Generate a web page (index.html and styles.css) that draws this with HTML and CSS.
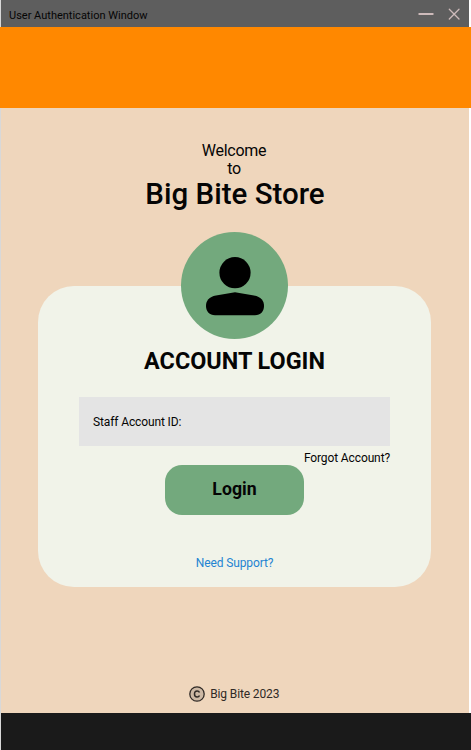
FILE: index.html
```html
<!DOCTYPE html>
<html lang="en">
<head>
<meta charset="utf-8">
<title>User Authentication Window</title>
<link rel="stylesheet" href="styles.css">
</head>
<body>
<div class="window">
  <header class="titlebar">
    <span class="titlebar-text">User Authentication Window</span>
    <svg class="controls" width="44" height="16" viewBox="0 0 44 16" fill="none" stroke="#cdbaba" stroke-linecap="round">
      <path d="M2.2 8H15.8" stroke-width="1.8"/>
      <path d="M32.3 3.3L42 13M42 3.3L32.3 13" stroke-width="1.3"/>
    </svg>
  </header>
  <div class="banner"></div>
  <main class="content">
    <p class="welcome">Welcome<br>to</p>
    <h1 class="store">Big Bite Store</h1>
    <section class="card">
      <div class="avatar">
        <svg width="58" height="59" viewBox="0 0 58 59">
          <circle cx="29" cy="15.7" r="15.6"/>
          <path d="M29 35.2L48 38.4C55 39.6 58 43.5 58 49C58 54.5 54.5 58.2 49 58.2H9C3.5 58.2 0 54.5 0 49C0 43.5 3 39.6 10 38.4Z"/>
        </svg>
      </div>
      <h2 class="heading">ACCOUNT LOGIN</h2>
      <div class="field">Staff Account ID:</div>
      <a class="forgot">Forgot Account?</a>
      <button class="login">Login</button>
      <a class="support">Need Support?</a>
    </section>
    <div class="copyright">
      <svg width="16" height="16" viewBox="0 0 16 16" fill="none" stroke="#302a26">
        <circle cx="8" cy="8" r="7.2" fill="#ccb8a4" stroke-width="1.3"/>
        <path d="M10.5 6.6C10.1 5.5 9.3 5 8.1 5C6.4 5 5.5 6.1 5.5 8S6.4 11 8.1 11C9.3 11 10.1 10.5 10.5 9.4" stroke-width="1.5"/>
      </svg>
      <span>Big Bite 2023</span>
    </div>
  </main>
  <footer class="taskbar"></footer>
</div>
</body>
</html>
```
FILE: styles.css
```css
* { box-sizing: border-box; }
body {
  margin: 0;
  background: #fff;
  color: #050505;
  font-family: Roboto, "Liberation Sans", sans-serif;
}
.window {
  height: 750px;
  display: flex;
  flex-direction: column;
  border-left: 1px solid #d8d8d8;
}
.titlebar {
  height: 27px;
  margin-right: 2px;
  padding: 3px 8px 0;
  display: flex;
  align-items: center;
  justify-content: space-between;
  background: #5e5e5e;
}
.titlebar-text {
  padding-top: 1px;
  font-size: 11px;
  line-height: 14px;
}
.controls { margin-top: -3px; }
.banner {
  height: 81px;
  margin-left: -1px;
  background: #ff8800;
}
.content {
  height: 605px;
  margin-right: 2px;
  padding-top: 34px;
  display: flex;
  flex-direction: column;
  align-items: center;
  background: #efd6bc;
}
.welcome {
  margin: 0 2px 0 0;
  font-size: 16px;
  line-height: 18px;
  letter-spacing: -0.25px;
  text-align: center;
}
.store {
  margin: -1px 0 0;
  font-size: 29.5px;
  line-height: 34px;
  font-weight: 500;
}
.card {
  width: 393px;
  height: 300.5px;
  margin: 75px 1px 0 0;
  padding: 0 41px;
  display: flex;
  flex-direction: column;
  align-items: center;
  border-radius: 36px;
  background: #f1f3e9;
}
.avatar {
  width: 107px;
  height: 107px;
  flex: none;
  margin-top: -54px;
  padding-top: 24.5px;
  display: flex;
  justify-content: center;
  border-radius: 50%;
  background: #73a97d;
}
.heading {
  margin: 8px 0 0;
  font-size: 23.4px;
  line-height: 28px;
  font-weight: 700;
}
.field {
  width: 100%;
  height: 49px;
  margin-top: 22px;
  padding-left: 14px;
  display: flex;
  align-items: center;
  background: #e4e4e4;
  font-size: 12px;
  letter-spacing: -0.12px;
}
.forgot {
  align-self: flex-end;
  margin-top: 5px;
  font-size: 12px;
  line-height: 14px;
  letter-spacing: -0.12px;
}
.login {
  width: 139px;
  height: 49.5px;
  flex: none;
  margin: 0;
  padding: 0 0 1px;
  border: 0;
  border-radius: 17px;
  background: #73a97d;
  color: #050505;
  font: 700 17.7px Roboto, "Liberation Sans", sans-serif;
}
.support {
  margin-top: 41.5px;
  color: #2484d2;
  font-size: 12px;
  line-height: 14px;
  letter-spacing: -0.12px;
}
.copyright {
  margin: 99.500px 2px 0 0;
  display: flex;
  align-items: center;
  gap: 5.5px;
  color: #302a26;
  font-size: 12px;
  letter-spacing: -0.12px;
}
.taskbar {
  height: 37px;
  background: #1a1a1a;
}
```
